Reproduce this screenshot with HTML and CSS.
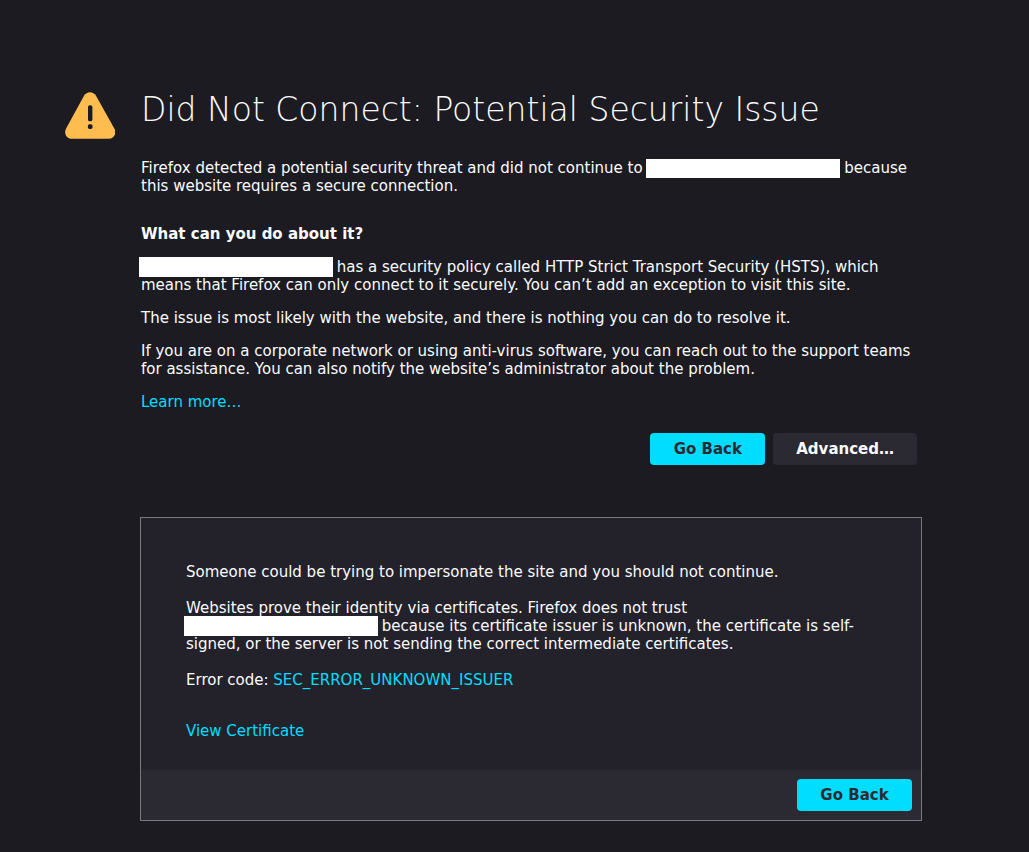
FILE: index.html
```html
<!DOCTYPE html>
<html lang="en">
<head>
<meta charset="utf-8">
<title>Warning: Potential Security Risk Ahead</title>
<link rel="stylesheet" href="styles.css">
</head>
<body>
<main class="page">
  <section class="error">
    <header class="title">
      <svg class="title-icon" viewBox="0 0 50 47" aria-hidden="true">
        <path class="icon-sign" d="M19 3.700C21.700-1 28.300-1 31 3.700L49.300 36.500C52 41.500 49 46.800 43.600 46.800H6.800C1.400 46.800-1.400 41.500 1.100 36.500Z"/>
        <rect class="icon-mark" x="23" y="13.300" width="4.400" height="16" rx="1.900"/>
        <rect class="icon-mark" x="22.900" y="32.200" width="4.600" height="4.700" rx="1.600"/>
      </svg>
      <h1>Did Not Connect: Potential Security Issue</h1>
    </header>
    <p class="lead">Firefox detected a potential security threat and did not continue to <span class="redacted"></span> because this website requires a secure connection.</p>
    <h2>What can you do about it?</h2>
    <p><span class="redacted redacted-start"></span> has a security policy called HTTP Strict Transport Security (HSTS), which means that Firefox can only connect to it securely. You can’t add an exception to visit this site.</p>
    <p>The issue is most likely with the website, and there is nothing you can do to resolve it.</p>
    <p>If you are on a corporate network or using anti-virus software, you can reach out to the support teams for assistance. You can also notify the website’s administrator about the problem.</p>
    <p><a href="#learn">Learn more…</a></p>
    <div class="buttons">
      <button class="primary" type="button">Go Back</button>
      <button type="button">Advanced…</button>
    </div>
  </section>
  <section class="advanced">
    <div class="details">
      <p>Someone could be trying to impersonate the site and you should not continue.</p>
      <p>Websites prove their identity via certificates. Firefox does not trust <span class="redacted redacted-start"></span> because its certificate issuer is unknown, the certificate is self-signed, or the server is not sending the correct intermediate certificates.</p>
      <p>Error code: <a href="#code">SEC_ERROR_UNKNOWN_ISSUER</a></p>
      <p class="certificate"><a href="#certificate">View Certificate</a></p>
    </div>
    <div class="panel-footer">
      <button class="primary" type="button">Go Back</button>
    </div>
  </section>
</main>
</body>
</html>
```
FILE: styles.css
```css
* {
  box-sizing: border-box;
}

body {
  margin: 0;
  background: #1c1b22;
  color: #fbfbfe;
  font: 15px/18px "DejaVu Sans", sans-serif;
}

.page {
  max-width: 815px;
  margin: 0 auto;
  padding: 88px 0 31px 33px;
}

.error {
  padding: 0 5px 0 1px;
}

h1,
h2,
p {
  margin: 0;
}

.title {
  display: flex;
  align-items: flex-start;
  gap: 26px;
  margin: 0 0 20px -76px;
}

.title-icon {
  flex: none;
  width: 50px;
  height: 47px;
  margin-top: 4px;
}

.icon-sign {
  fill: #ffbd4f;
}

.icon-mark {
  fill: #1c1b22;
}

h1 {
  font-size: 33px;
  line-height: 44px;
  font-weight: 200;
}

.lead {
  margin-bottom: 30px;
}

h2 {
  margin-bottom: 15px;
  font-size: 15px;
  line-height: 18px;
}

.error p + p {
  margin-top: 15px;
}

a {
  color: #00ddff;
  text-decoration: none;
}

a:hover {
  text-decoration: underline;
}

.redacted {
  display: inline-block;
  width: 194px;
  height: 19px;
  margin: 0 -1px -1px;
  background: #fff;
  vertical-align: bottom;
}

.redacted-start {
  height: 20px;
  margin: -1px -1px -1px -2px;
}

.buttons {
  display: flex;
  justify-content: flex-end;
  gap: 8px;
  margin-top: 22px;
}

button {
  min-width: 115px;
  min-height: 32px;
  padding: 0 23px;
  border: 0;
  border-radius: 4px;
  background: #2b2a33;
  color: #fbfbfe;
  font: bold 15px/18px "DejaVu Sans", sans-serif;
  cursor: pointer;
}

.primary {
  background: #00ddff;
  color: #2b2a33;
}

.advanced {
  margin-top: 52px;
  border: 1px solid #7a797f;
  background: #23222b;
}

.details {
  padding: 45px 45px 30px;
}

.details p + p {
  margin-top: 18px;
}

.details .certificate {
  margin-top: 33px;
}

.panel-footer {
  display: flex;
  justify-content: flex-end;
  padding: 9px;
  background: #2b2a33;
}
```
